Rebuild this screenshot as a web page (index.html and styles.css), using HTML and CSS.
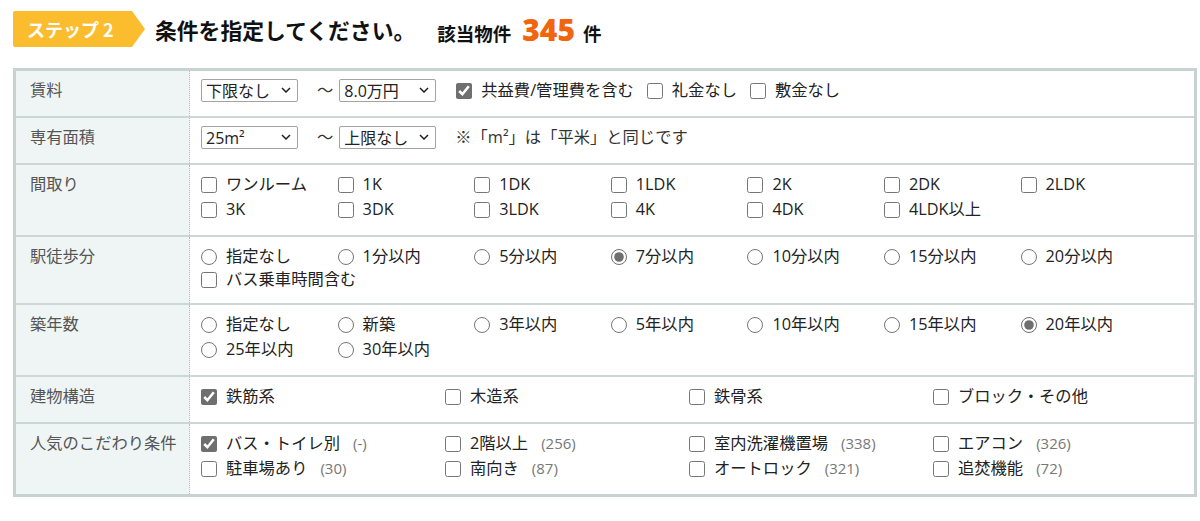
FILE: index.html
```html
<!DOCTYPE html>
<html lang="ja">
<head>
    <meta charset="UTF-8">
    <meta name="viewport" content="width=device-width, initial-scale=1.0">
    <title>条件を指定</title>
    <link rel="stylesheet" href="styles.css">
</head>
<body>
    <div class="step-head">
        <span class="step-badge">ステップ 2</span>
        <h2 class="step-title">条件を指定してください。</h2>
        <p class="hit-count">該当物件<strong>345</strong>件</p>
    </div>

    <table class="cond-table">
        <tr>
            <th>賃料</th>
            <td>
                <div class="range-row">
                    <span class="select-wrap">
                        <select><option>下限なし</option></select>
                        <svg class="chev" viewBox="0 0 10 6"><path d="M1 1l4 4 4-4"/></svg>
                    </span>
                    <span class="tilde">～</span>
                    <span class="select-wrap">
                        <select><option>8.0万円</option></select>
                        <svg class="chev" viewBox="0 0 10 6"><path d="M1 1l4 4 4-4"/></svg>
                    </span>
                    <label class="opt first"><input type="checkbox" checked>共益費/管理費を含む</label>
                    <label class="opt"><input type="checkbox">礼金なし</label>
                    <label class="opt"><input type="checkbox">敷金なし</label>
                </div>
            </td>
        </tr>
        <tr>
            <th>専有面積</th>
            <td>
                <div class="range-row">
                    <span class="select-wrap">
                        <select><option>25m²</option></select>
                        <svg class="chev" viewBox="0 0 10 6"><path d="M1 1l4 4 4-4"/></svg>
                    </span>
                    <span class="tilde">～</span>
                    <span class="select-wrap">
                        <select><option>上限なし</option></select>
                        <svg class="chev" viewBox="0 0 10 6"><path d="M1 1l4 4 4-4"/></svg>
                    </span>
                    <span class="note">※「m²」は「平米」と同じです</span>
                </div>
            </td>
        </tr>
        <tr>
            <th>間取り</th>
            <td>
                <div class="opts cols-7">
                    <label class="opt"><input type="checkbox">ワンルーム</label>
                    <label class="opt"><input type="checkbox">1K</label>
                    <label class="opt"><input type="checkbox">1DK</label>
                    <label class="opt"><input type="checkbox">1LDK</label>
                    <label class="opt"><input type="checkbox">2K</label>
                    <label class="opt"><input type="checkbox">2DK</label>
                    <label class="opt"><input type="checkbox">2LDK</label>
                    <label class="opt"><input type="checkbox">3K</label>
                    <label class="opt"><input type="checkbox">3DK</label>
                    <label class="opt"><input type="checkbox">3LDK</label>
                    <label class="opt"><input type="checkbox">4K</label>
                    <label class="opt"><input type="checkbox">4DK</label>
                    <label class="opt"><input type="checkbox">4LDK以上</label>
                </div>
            </td>
        </tr>
        <tr>
            <th>駅徒歩分</th>
            <td>
                <div class="opts cols-7">
                    <label class="opt"><input type="radio" name="walk">指定なし</label>
                    <label class="opt"><input type="radio" name="walk">1分以内</label>
                    <label class="opt"><input type="radio" name="walk">5分以内</label>
                    <label class="opt"><input type="radio" name="walk" checked>7分以内</label>
                    <label class="opt"><input type="radio" name="walk">10分以内</label>
                    <label class="opt"><input type="radio" name="walk">15分以内</label>
                    <label class="opt"><input type="radio" name="walk">20分以内</label>
                </div>
                <label class="opt bus"><input type="checkbox">バス乗車時間含む</label>
            </td>
        </tr>
        <tr>
            <th>築年数</th>
            <td>
                <div class="opts cols-7">
                    <label class="opt"><input type="radio" name="age">指定なし</label>
                    <label class="opt"><input type="radio" name="age">新築</label>
                    <label class="opt"><input type="radio" name="age">3年以内</label>
                    <label class="opt"><input type="radio" name="age">5年以内</label>
                    <label class="opt"><input type="radio" name="age">10年以内</label>
                    <label class="opt"><input type="radio" name="age">15年以内</label>
                    <label class="opt"><input type="radio" name="age" checked>20年以内</label>
                    <label class="opt"><input type="radio" name="age">25年以内</label>
                    <label class="opt"><input type="radio" name="age">30年以内</label>
                </div>
            </td>
        </tr>
        <tr>
            <th>建物構造</th>
            <td>
                <div class="opts cols-4">
                    <label class="opt"><input type="checkbox" checked>鉄筋系</label>
                    <label class="opt"><input type="checkbox">木造系</label>
                    <label class="opt"><input type="checkbox">鉄骨系</label>
                    <label class="opt"><input type="checkbox">ブロック・その他</label>
                </div>
            </td>
        </tr>
        <tr>
            <th>人気のこだわり条件</th>
            <td>
                <div class="opts cols-4">
                    <label class="opt"><input type="checkbox" checked>バス・トイレ別<span class="count">(-)</span></label>
                    <label class="opt"><input type="checkbox">2階以上<span class="count">(256)</span></label>
                    <label class="opt"><input type="checkbox">室内洗濯機置場<span class="count">(338)</span></label>
                    <label class="opt"><input type="checkbox">エアコン<span class="count">(326)</span></label>
                    <label class="opt"><input type="checkbox">駐車場あり<span class="count">(30)</span></label>
                    <label class="opt"><input type="checkbox">南向き<span class="count">(87)</span></label>
                    <label class="opt"><input type="checkbox">オートロック<span class="count">(321)</span></label>
                    <label class="opt"><input type="checkbox">追焚機能<span class="count">(72)</span></label>
                </div>
            </td>
        </tr>
    </table>
</body>
</html>
```

FILE: styles.css
```css
body {
    margin: 0;
    padding: 11px 3px 0 13px;
    background-color: #ffffff;
    color: #333333;
    font-family: "Open Sans", "Noto Sans CJK JP", sans-serif;
}

/* header */
.step-head {
    display: flex;
    align-items: center;
    height: 36px;
    margin-bottom: 21px;
}

.step-badge {
    display: flex;
    align-items: center;
    width: 132px;
    height: 36px;
    padding-left: 14px;
    box-sizing: border-box;
    background-color: #fbbd2e;
    color: #ffffff;
    font-family: "Noto Sans CJK JP", sans-serif;
    font-size: 18px;
    font-weight: bold;
    white-space: pre;
    border-radius: 2px;
    clip-path: polygon(0 0, calc(100% - 13px) 0, 100% 50%, calc(100% - 13px) 100%, 0 100%);
}

.step-title {
    margin: 0 0 0 10px;
    font-family: "Noto Sans CJK JP", sans-serif;
    font-size: 21.8px;
    font-weight: bold;
    color: #111111;
}

.hit-count {
    display: flex;
    align-items: baseline;
    margin: 0 0 0 22px;
    font-family: "Noto Sans CJK JP", sans-serif;
    font-size: 18.5px;
    font-weight: bold;
    color: #111111;
}

.hit-count strong {
    margin: 0 8px 0 11px;
    font-family: "Open Sans", sans-serif;
    font-size: 30px;
    color: #f0650e;
}

/* table */
.cond-table {
    width: 1184px;
    border-collapse: collapse;
    border: 3px solid #c8d2d3;
    font-size: 16.3px;
    line-height: 25px;
}

.cond-table tr {
    border-bottom: 2px solid #cdd6d7;
}

.cond-table th {
    width: 147px;
    padding: 7px 12px 13px 14px;
    background-color: #eff5f5;
    color: #555555;
    font-weight: normal;
    text-align: left;
    vertical-align: top;
    white-space: nowrap;
    border-right: 1px dotted #b5bebf;
}

.cond-table td {
    padding: 7px 11px 13px;
    vertical-align: top;
}

.range-row {
    display: flex;
    align-items: center;
    height: 25px;
}

.select-wrap {
    position: relative;
    display: inline-flex;
}

.select-wrap select {
    width: 97px;
    height: 23px;
    padding: 0 0 0 4px;
    border: 1px solid #a3a3a3;
    border-radius: 2px;
    background-color: #ffffff;
    color: #222222;
    font-family: inherit;
    font-size: 16px;
    appearance: none;
    -webkit-appearance: none;
}

.chev {
    position: absolute;
    right: 7px;
    top: 8px;
    width: 10px;
    height: 6px;
    fill: none;
    stroke: #222222;
    stroke-width: 1.5;
    pointer-events: none;
}

.tilde {
    margin: 0 6px 0 19px;
    color: #333333;
}

.note {
    margin-left: 19px;
}

.opts {
    display: grid;
}

.cols-7 {
    grid-template-columns: repeat(7, 136.6px);
}

.cols-4 {
    grid-template-columns: repeat(4, 244px);
}

.opt {
    display: flex;
    align-items: center;
    white-space: nowrap;
    color: #222222;
}

.range-row .opt {
    margin-left: 13px;
}

.range-row .opt.first {
    margin-left: 20px;
}

.opt input {
    width: 16px;
    height: 16px;
    margin: 0 9px 0 0;
    accent-color: #6f6f6f;
}

.bus {
    line-height: 21px;
}

.count {
    margin-left: 13px;
    font-size: 15px;
    color: #777777;
}
```
